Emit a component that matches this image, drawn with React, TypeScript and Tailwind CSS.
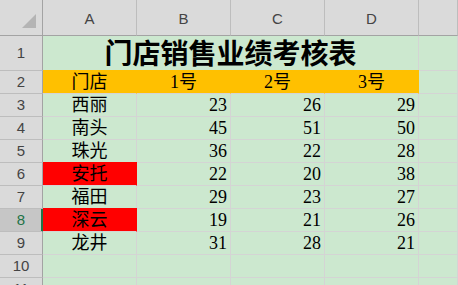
import React from "react";

const rows: [string, number, number, number, boolean][] = [
  ["西丽", 23, 26, 29, false],
  ["南头", 45, 51, 50, false],
  ["珠光", 36, 22, 28, false],
  ["安托", 22, 20, 38, true],
  ["福田", 29, 23, 27, false],
  ["深云", 19, 21, 26, true],
  ["龙井", 31, 28, 21, false],
];

const serif = { fontFamily: '"Liberation Serif", "Noto Sans CJK SC", serif' };
const sans = { fontFamily: '"Liberation Sans", "Noto Sans", sans-serif' };

function ColHead({ label }: { label: string }) {
  return (
    <div
      className="flex items-center justify-center pt-[4px] bg-[#dadada] border-r border-b border-r-[#bdbdbd] border-b-[#a3a3a3] text-[15px] text-[#444]"
      style={sans}
    >
      {label}
    </div>
  );
}

function RowHead({ n, selected }: { n: number; selected?: boolean }) {
  return (
    <div
      className={
        selected
          ? "flex items-center justify-center bg-[#c6c6c6] border-r border-b border-r-[#217346] border-b-[#bdbdbd] shadow-[inset_-1px_0_0_#217346] text-[15px] text-[#217346]"
          : "flex items-center justify-center bg-[#dadada] border-r border-b border-r-[#a3a3a3] border-b-[#bdbdbd] text-[15px] text-[#444]"
      }
      style={sans}
    >
      {n}
    </div>
  );
}

function Cell({
  children,
  align = "right",
  fill,
}: {
  children?: React.ReactNode;
  align?: "right" | "center";
  fill?: "red" | "orange";
}) {
  let cls = "flex items-end pb-[1px] border-r border-b text-[18px] leading-[20px] text-black ";
  cls += align === "right" ? "justify-end pr-[3px] " : "justify-center ";
  if (fill === "red") {
    cls += "bg-[#ff0000] border-r-[#ff0000] border-b-[#d4d4d4] shadow-[0_-1px_0_#ff0000]";
  } else if (fill === "orange") {
    cls += "bg-[#ffc000] border-r-[#ffc000] border-b-[#d4d4d4] shadow-[0_-1px_0_#ffc000]";
  } else {
    cls += "bg-[#cce8cf] border-[#d4d4d4]";
  }
  return (
    <div className={cls} style={serif}>
      {children}
    </div>
  );
}

export default function App() {
  return (
    <div className="w-[458px] h-[285px] overflow-hidden bg-[#cce8cf]">
      <div className="grid grid-cols-[43px_94px_94px_94px_94px_1fr] grid-rows-[36px_35px_repeat(10,23px)]">
        {/* corner */}
        <div className="relative bg-[#dadada] border-r border-b border-[#a3a3a3]">
          <svg
            className="absolute right-[6px] bottom-[7px]"
            width="14"
            height="14"
            viewBox="0 0 14 14"
          >
            <polygon points="14,0 14,14 0,14" fill="#b4b4b4" />
          </svg>
        </div>
        <ColHead label="A" />
        <ColHead label="B" />
        <ColHead label="C" />
        <ColHead label="D" />
        <ColHead label="" />

        {/* row 1 */}
        <RowHead n={1} />
        <div
          className="col-span-4 flex items-center justify-center pt-[3px] bg-[#cce8cf] border-r border-b border-[#d4d4d4] text-[28px] leading-[32px] font-bold text-black"
          style={serif}
        >
          门店销售业绩考核表
        </div>
        <Cell />

        {/* row 2 */}
        <RowHead n={2} />
        <Cell align="center" fill="orange">门店</Cell>
        <Cell align="center" fill="orange">1号</Cell>
        <Cell align="center" fill="orange">2号</Cell>
        <Cell align="center" fill="orange">3号</Cell>
        <Cell />

        {rows.map(([name, b, c, d, red], i) => (
          <React.Fragment key={name}>
            <RowHead n={i + 3} selected={i + 3 === 8} />
            <Cell align="center" fill={red ? "red" : undefined}>
              {name}
            </Cell>
            <Cell>{b}</Cell>
            <Cell>{c}</Cell>
            <Cell>{d}</Cell>
            <Cell />
          </React.Fragment>
        ))}

        <RowHead n={10} />
        <Cell />
        <Cell />
        <Cell />
        <Cell />
        <Cell />

        <RowHead n={11} />
        <Cell />
        <Cell />
        <Cell />
        <Cell />
        <Cell />
      </div>
    </div>
  );
}
